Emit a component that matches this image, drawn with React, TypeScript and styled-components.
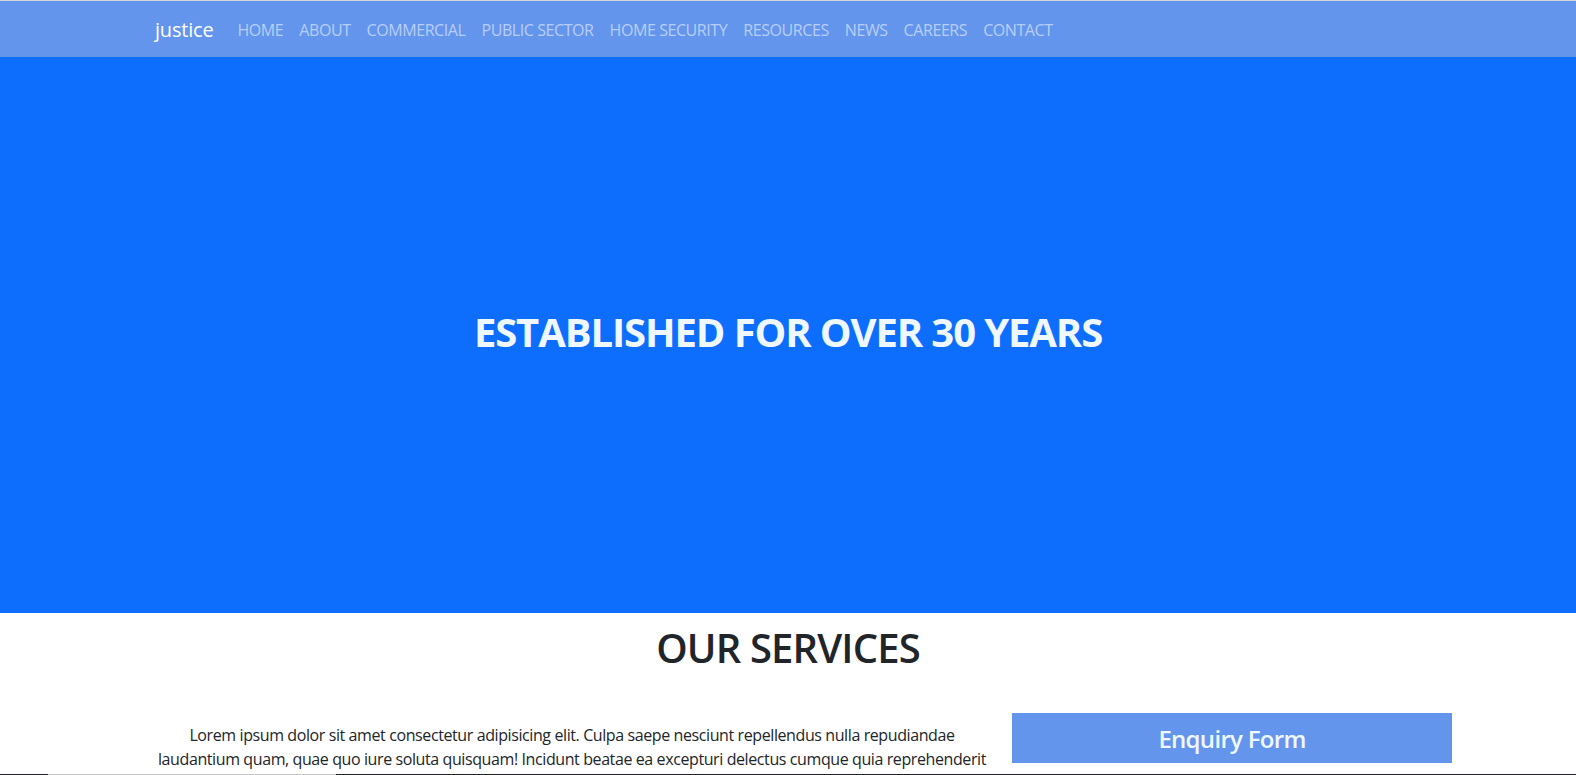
import React from "react";
import styled, { createGlobalStyle } from "styled-components";

const Global = createGlobalStyle`
  html, body { margin: 0; padding: 0; }
  body {
    font-family: "Open Sans", "Noto Sans", sans-serif;
    color: #212529;
    background: #fff;
    overflow: hidden;
  }
  * { box-sizing: border-box; }
`;

const NavBar = styled.nav`
  background: #6495ed;
  border-top: 1px solid #d6d6d6;
  height: 57px;
  padding: 8px 0;
`;

const NavInner = styled.div`
  margin-left: calc(50% - 633px);
  display: flex;
  align-items: center;
  height: 40px;
  padding-top: 1px;
`;

const Brand = styled.a`
  font-size: 20px;
  line-height: 30px;
  color: #fff;
  margin-right: 16px;
  letter-spacing: -0.2px;
  text-decoration: none;
`;

const NavList = styled.ul`
  display: flex;
  list-style: none;
  margin: 0;
  padding: 0;
`;

const NavLink = styled.a`
  display: block;
  padding: 8px;
  font-size: 16px;
  line-height: 24px;
  letter-spacing: -0.42px;
  color: rgba(255, 255, 255, 0.55);
  text-decoration: none;
`;

const Hero = styled.header`
  height: 556px;
  padding-bottom: 6px;
  background: #0d6efd;
  display: flex;
  align-items: center;
  justify-content: center;
`;

const HeroTitle = styled.h1`
  margin: 0;
  font-size: 40px;
  line-height: 48px;
  font-weight: 700;
  letter-spacing: -1.1px;
  color: #f0f8ff;
`;

const Services = styled.section`
  padding-top: 11px;
`;

const SectionTitle = styled.h1`
  margin: 0;
  text-align: center;
  font-size: 40px;
  line-height: 48px;
  font-weight: 600;
  letter-spacing: -0.85px;
  color: #212529;
`;

const Row = styled.div`
  margin-top: 41px;
  margin-left: calc(50% - 656px);
  display: grid;
  grid-template-columns: 880px 440px;
`;

const TextCol = styled.div`
  padding: 10px 12px 0;
  text-align: center;
  font-size: 16px;
  line-height: 24px;
  letter-spacing: -0.4px;
`;

const EnquiryBox = styled.div`
  height: 50px;
  background: #6495ed;
  color: #f0f8ff;
  font-size: 24px;
  font-weight: 600;
  letter-spacing: -0.7px;
  display: flex;
  align-items: center;
  justify-content: center;
`;

const BottomEdge = styled.div`
  position: fixed;
  left: 0;
  right: 0;
  bottom: 0;
  height: 1px;
  background: #202124;
`;

const EdgeSegment = styled.div`
  margin-left: 48px;
  width: 288px;
  height: 1px;
  background: #c4c4c4;
`;

const links = [
  "HOME",
  "ABOUT",
  "COMMERCIAL",
  "PUBLIC SECTOR",
  "HOME SECURITY",
  "RESOURCES",
  "NEWS",
  "CAREERS",
  "CONTACT",
];

export default function App() {
  return (
    <>
      <Global />
      <NavBar>
        <NavInner>
          <Brand href="#">justice</Brand>
          <NavList>
            {links.map((l) => (
              <li key={l}>
                <NavLink href="#">{l}</NavLink>
              </li>
            ))}
          </NavList>
        </NavInner>
      </NavBar>
      <Hero>
        <HeroTitle>ESTABLISHED FOR OVER 30 YEARS</HeroTitle>
      </Hero>
      <Services>
        <SectionTitle>OUR SERVICES</SectionTitle>
        <Row>
          <TextCol>
            Lorem ipsum dolor sit amet consectetur adipisicing elit. Culpa saepe nesciunt repellendus nulla repudiandae
            <br />
            laudantium quam, quae quo iure soluta quisquam! Incidunt beatae ea excepturi delectus cumque quia reprehenderit
            <br />
            voluptatum, dolores nemo.
          </TextCol>
          <EnquiryBox>Enquiry Form</EnquiryBox>
        </Row>
      </Services>
      <BottomEdge>
        <EdgeSegment />
      </BottomEdge>
    </>
  );
}
